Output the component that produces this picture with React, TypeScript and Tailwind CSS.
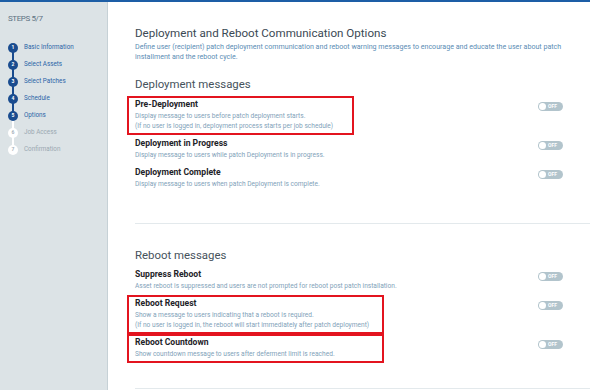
import React from 'react';

type Step = { n: number; label: string };

const steps: Step[] = [
  { n: 1, label: 'Basic Information' },
  { n: 2, label: 'Select Assets' },
  { n: 3, label: 'Select Patches' },
  { n: 4, label: 'Schedule' },
  { n: 5, label: 'Options' },
  { n: 6, label: 'Job Access' },
  { n: 7, label: 'Confirmation' },
];

const CURRENT = 5;

type Item = { title: string; lines: string[]; boxed?: string };

const deploymentItems: Item[] = [
  {
    title: 'Pre-Deployment',
    lines: [
      'Display message to users before patch deployment starts.',
      '(If no user is logged in, deployment process starts per job schedule)',
    ],
    boxed: 'w-[227px]',
  },
  {
    title: 'Deployment in Progress',
    lines: ['Display message to users while patch Deployment is in progress.'],
  },
  {
    title: 'Deployment Complete',
    lines: ['Display message to users when patch Deployment is complete.'],
  },
];

const rebootItems: Item[] = [
  {
    title: 'Suppress Reboot',
    lines: ['Asset reboot is suppressed and users are not prompted for reboot post patch installation.'],
  },
  {
    title: 'Reboot Request',
    lines: [
      'Show a message to users indicating that a reboot is required.',
      '(If no user is logged in, the reboot will start immediately after patch deployment)',
    ],
    boxed: 'w-[257px]',
  },
  {
    title: 'Reboot Countdown',
    lines: ['Show countdown message to users after deferment limit is reached.'],
    boxed: 'w-[257px]',
  },
];

function Toggle() {
  return (
    <div className="mt-[6px] w-[25px] h-[9px] rounded-full bg-[#b2c4cc] flex items-center pl-[1px] shrink-0">
      <div className="w-[7px] h-[7px] rounded-full bg-white" />
      <span className="ml-[2px] text-[5px] leading-[5px] font-bold text-white">OFF</span>
    </div>
  );
}

function OptionRow({ item }: { item: Item }) {
  return (
    <div className="flex items-start justify-between">
      <div
        className={`border-2 px-[6px] pb-[2px] ${
          item.boxed ? `border-[#e3141f] ${item.boxed}` : 'border-transparent'
        }`}
      >
        <p className="text-[8.6px] leading-[12px] font-bold text-[#1e2328]">{item.title}</p>
        <div className="mt-[1px] text-[6.6px] leading-[10px] text-[#7fa2b9] whitespace-nowrap">
          {item.lines.map((l) => (
            <p key={l}>{l}</p>
          ))}
        </div>
      </div>
      <Toggle />
    </div>
  );
}

export default function App() {
  return (
    <div
      className="w-[590px] h-[390px] overflow-hidden bg-white flex flex-col"
      style={{ fontFamily: 'Roboto, "Liberation Sans", sans-serif' }}
    >
      <div className="h-[2px] bg-[#1d5ea6] shrink-0" />
      <div className="flex flex-1 min-h-0">
        {/* Steps sidebar */}
        <aside className="w-[108px] shrink-0 bg-[#dce3e6] border-r border-[#c6d1d6] pt-[12px]">
          <p className="pl-[8px] text-[8px] leading-[10px] text-[#5c7282] tracking-[-0.4px]">STEPS 5/7</p>
          <ul className="mt-[15px]">
            {steps.map((s) => {
              const done = s.n <= CURRENT;
              return (
                <li key={s.n} className="h-[17px] flex items-center pl-[8px]">
                  <div className="relative w-[10px] h-full flex items-center justify-center">
                    {s.n > 1 && (
                      <span
                        className={`absolute left-[4px] top-0 h-1/2 w-[2px] ${done ? 'bg-[#1a4c8f]' : 'bg-white'}`}
                      />
                    )}
                    {s.n < steps.length && (
                      <span
                        className={`absolute left-[4px] bottom-0 h-1/2 w-[2px] ${
                          s.n < CURRENT ? 'bg-[#1a4c8f]' : 'bg-white'
                        }`}
                      />
                    )}
                    <span
                      className={`relative w-[10px] h-[10px] rounded-full flex items-center justify-center text-[5px] font-bold ${
                        done ? 'bg-[#1a4c8f] text-white' : 'bg-white text-[#a5b2ba]'
                      }`}
                    >
                      {s.n}
                    </span>
                  </div>
                  <span
                    className={`ml-[6px] text-[6.3px] ${done ? 'text-[#2a64a6]' : 'text-[#9aa8b1]'}`}
                  >
                    {s.label}
                  </span>
                </li>
              );
            })}
          </ul>
        </aside>

        {/* Main content */}
        <main className="flex-1 pt-[23px] pl-[19px] pr-[27px]">
          <h1 className="pl-[8px] text-[11.6px] leading-[16px] text-[#3b4954]">
            Deployment and Reboot Communication Options
          </h1>
          <p className="mt-[1px] pl-[8px] text-[7.1px] leading-[10px] text-[#5b8db5]">
            Define user (recipient) patch deployment communication and reboot warning messages to encourage and educate the user about patch installment and the reboot cycle.
          </p>

          <h2 className="mt-[14px] pl-[8px] text-[11.4px] leading-[16px] text-[#46525c]">Deployment messages</h2>
          <div className="mt-[4px] flex flex-col">
            {deploymentItems.map((it) => (
              <OptionRow key={it.title} item={it} />
            ))}
          </div>

          <div className="mt-[30px] ml-[8px] -mr-[27px] h-px bg-[#e3e9ec]" />

          <h2 className="mt-[23px] pl-[8px] text-[11.4px] leading-[16px] text-[#46525c]">Reboot messages</h2>
          <div className="mt-[3px] flex flex-col">
            {rebootItems.map((it) => (
              <OptionRow key={it.title} item={it} />
            ))}
          </div>

          <div className="mt-[25px] ml-[8px] -mr-[27px] h-px bg-[#e3e9ec]" />
        </main>
      </div>
    </div>
  );
}
